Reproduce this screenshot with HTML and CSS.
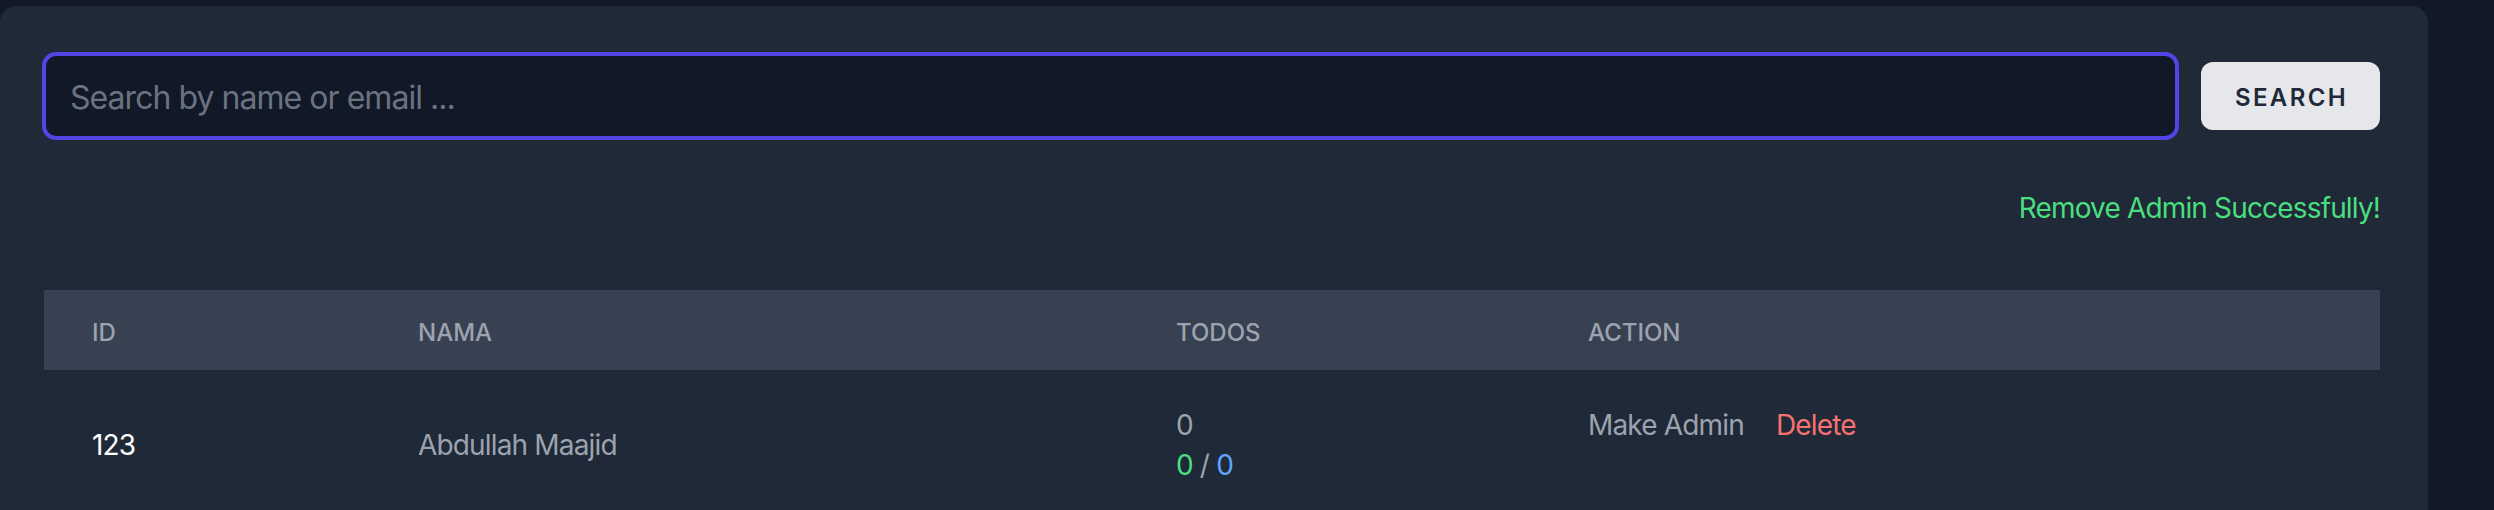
FILE: index.html
```html
<!DOCTYPE html>
<html lang="id">
<head>
<meta charset="utf-8">
<title>Users</title>
<link rel="stylesheet" href="styles.css">
</head>
<body>
<div class="card">
  <form class="search-row">
    <input class="search-input" type="text" placeholder="Search by name or email ...">
    <button class="btn" type="button">Search</button>
  </form>
  <p class="flash">Remove Admin Successfully!</p>
  <table class="users">
    <thead>
      <tr>
        <th class="c-id">ID</th>
        <th class="c-name">Nama</th>
        <th class="c-todos">Todos</th>
        <th class="c-action">Action</th>
      </tr>
    </thead>
    <tbody>
      <tr>
        <td class="id">123</td>
        <td class="name">Abdullah Maajid</td>
        <td class="todos">
          <div>0</div>
          <div><span class="green">0</span> / <span class="blue">0</span></div>
        </td>
        <td class="action"><a class="make">Make Admin</a><a class="delete">Delete</a></td>
      </tr>
    </tbody>
  </table>
</div>
</body>
</html>
```
FILE: styles.css
```css
* { box-sizing: border-box; }
html, body { margin: 0; padding: 0; }
body {
  background: #111827;
  font-family: "Inter", "Lato", sans-serif;
  height: 510px;
  overflow: hidden;
}
.card {
  margin-top: 6px;
  width: 2428px;
  height: 600px;
  background: #1f2937;
  border-radius: 16px;
  padding: 46px 48px 0 44px;
}
.search-row {
  display: flex;
  align-items: center;
  gap: 22px;
  margin: 0 0 0 -2px;
}
.search-input {
  flex: 1;
  height: 88px;
  border: 4px solid #4f46e5;
  border-radius: 14px;
  background: #111827;
  padding: 2px 0 0 24px;
  font-family: inherit;
  font-size: 32px;
  letter-spacing: -0.03em;
  color: #d1d5db;
  outline: none;
}
.search-input::placeholder { color: #6b7280; }
.btn {
  width: 179px;
  height: 68px;
  border: none;
  border-radius: 12px;
  background: #e5e7eb;
  color: #1f2937;
  font-family: inherit;
  font-size: 24px;
  font-weight: 600;
  letter-spacing: 2.4px;
  text-transform: uppercase;
  padding: 2px 0 0 2px;
}
.flash {
  margin: 48px 0 0;
  text-align: right;
  color: #4ade80;
  font-size: 28px;
  line-height: 40px;
  letter-spacing: -0.03em;
}
.users {
  margin-top: 62px;
  width: 100%;
  border-collapse: collapse;
}
.users th {
  background: #374151;
  color: #9ca3af;
  font-size: 24px;
  line-height: 32px;
  font-weight: 500;
  text-transform: uppercase;
  text-align: left;
  padding: 27px 48px 21px;
}
.c-id { width: 326px; }
.c-name { width: 758px; }
.c-todos { width: 412px; }
.users td {
  padding: 35px 48px 29px;
  font-size: 28px;
  line-height: 40px;
  letter-spacing: -0.03em;
  color: #9ca3af;
  vertical-align: middle;
}
.users td.id { color: #ffffff; }
.users td.action { vertical-align: top; }
.green { color: #4ade80; }
.blue { color: #60a5fa; }
.make { color: #9ca3af; }
.delete { color: #f87171; margin-left: 32px; }
```
